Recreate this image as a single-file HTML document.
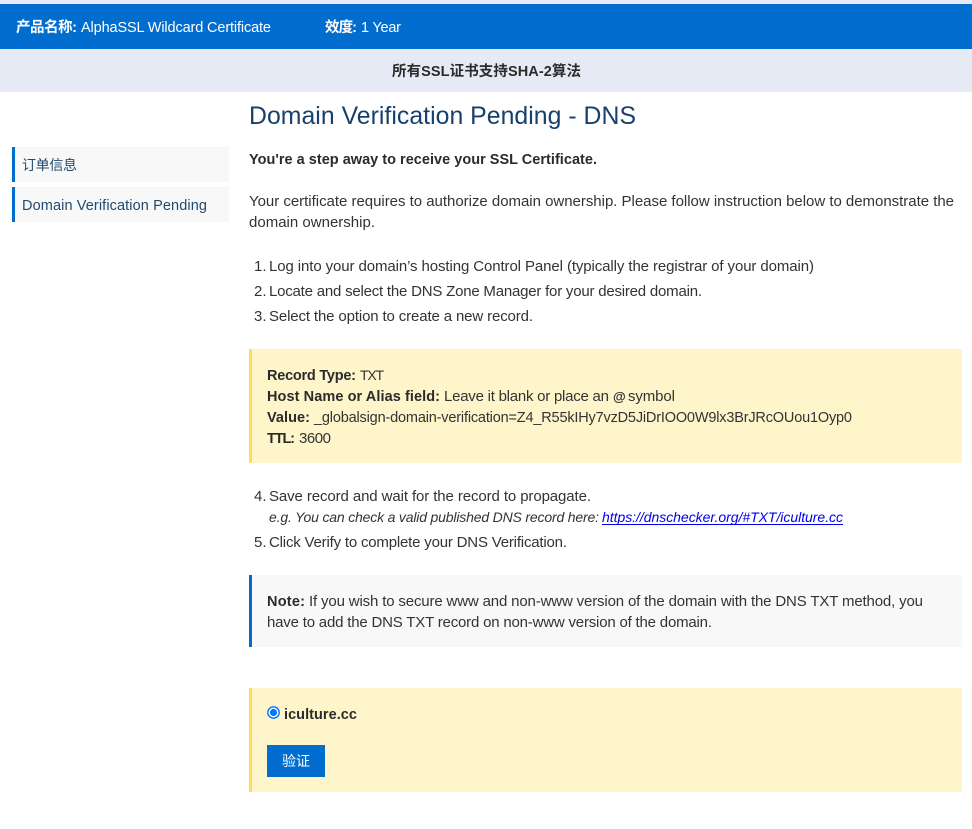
<!DOCTYPE html>
<html lang="zh"><head><meta charset="utf-8"><title>Domain Verification Pending - DNS</title>
<style>
html,body{margin:0;padding:0;background:#fff;width:972px;height:829px;overflow:hidden}
svg{display:block}
text{font-family:"Liberation Sans","Noto Sans CJK SC",sans-serif;font-size:15px;fill:#333;white-space:pre}
.b{font-weight:700;fill:#2b2b2b;font-size:14.5px}
.w{fill:#fff;font-size:14.5px}
</style></head><body>
<svg width="972" height="829" viewBox="0 0 972 829" xmlns="http://www.w3.org/2000/svg">
<rect width="972" height="829" fill="#fff"/>
<rect width="972" height="4" fill="#e6eaf4"/>
<rect y="4" width="972" height="45" fill="#006dcf"/>
<rect y="49" width="972" height="43" fill="#e6eaf4"/>
<rect x="12" y="147" width="217" height="35" fill="#f8f8f8"/><rect x="12" y="147" width="3" height="35" fill="#006dcf"/>
<rect x="12" y="187" width="217" height="35" fill="#f8f8f8"/><rect x="12" y="187" width="3" height="35" fill="#006dcf"/>
<rect x="249" y="349" width="713" height="114" fill="#fef5cb"/><rect x="249" y="349" width="3" height="114" fill="#ffdd57"/>
<rect x="249" y="575" width="713" height="72" fill="#f8f8f8"/><rect x="249" y="575" width="3" height="72" fill="#006dcf"/>
<rect x="249" y="688" width="713" height="104" fill="#fef5cb"/><rect x="249" y="688" width="3" height="104" fill="#ffdd57"/>
<rect x="267" y="745" width="58" height="32" fill="#006dcf"/>

<text class="b" style="fill:#fff" x="16" y="32" textLength="61">产品名称:</text>
<text class="w" x="81" y="32" textLength="190">AlphaSSL Wildcard Certificate</text>
<text class="b" style="fill:#fff" x="325" y="32" textLength="32">效度:</text>
<text class="w" x="361" y="32" textLength="40">1 Year</text>
<text class="b" x="392" y="76" textLength="189">所有SSL证书支持SHA-2算法</text>

<text x="249" y="124" textLength="387" style="font-size:24.8px;fill:#17406d">Domain Verification Pending - DNS</text>
<text x="22" y="170" textLength="55" style="font-size:14px;fill:#1f4a70">订单信息</text>
<text x="22" y="210" textLength="185" style="font-size:14.5px;fill:#1f4a70">Domain Verification Pending</text>

<text class="b" x="249" y="164" textLength="348">You're a step away to receive your SSL Certificate.</text>
<text x="249" y="206" textLength="705">Your certificate requires to authorize domain ownership. Please follow instruction below to demonstrate the</text>
<text x="249" y="227" textLength="126">domain ownership.</text>

<text x="254" y="271">1.</text><text x="269" y="271" textLength="545">Log into your domain’s hosting Control Panel (typically the registrar of your domain)</text>
<text x="254" y="296">2.</text><text x="269" y="296" textLength="433">Locate and select the DNS Zone Manager for your desired domain.</text>
<text x="254" y="321">3.</text><text x="269" y="321" textLength="264">Select the option to create a new record.</text>

<text class="b" x="267" y="380" textLength="89">Record Type:</text>
<text x="360" y="380" textLength="24" style="font-size:14px">TXT</text>
<text class="b" x="267" y="401" textLength="173">Host Name or Alias field:</text>
<text x="444" y="401" textLength="165">Leave it blank or place an</text>
<text class="b" x="613" y="401" style="font-size:13px">@</text>
<text x="628" y="401" textLength="47">symbol</text>
<text class="b" x="267" y="422" textLength="43">Value:</text>
<text x="314" y="422" textLength="538" style="font-size:14.5px">_globalsign-domain-verification=Z4_R55kIHy7vzD5JiDrIOO0W9lx3BrJRcOUou1Oyp0</text>
<text class="b" x="267" y="443" textLength="28">TTL:</text>
<text x="299" y="443" textLength="32">3600</text>

<text x="254" y="501">4.</text><text x="269" y="501" textLength="322">Save record and wait for the record to propagate.</text>
<text x="269" y="522" textLength="330" style="font-size:14px;font-style:italic">e.g. You can check a valid published DNS record here:</text>
<text x="602" y="522" textLength="241" style="font-size:14px;font-style:italic;fill:#0000ee">https://dnschecker.org/#TXT/iculture.cc</text>
<rect x="602" y="524" width="241" height="1" fill="#0000ee"/>
<text x="254" y="547">5.</text><text x="269" y="547" textLength="298">Click Verify to complete your DNS Verification.</text>

<text class="b" x="267" y="606" textLength="38">Note:</text>
<text x="309" y="606" textLength="614">If you wish to secure www and non-www version of the domain with the DNS TXT method, you</text>
<text x="267" y="627" textLength="445">have to add the DNS TXT record on non-www version of the domain.</text>

<circle cx="273.5" cy="712.5" r="5.7" fill="#fff" stroke="#0075ff" stroke-width="1.4"/>
<circle cx="273.5" cy="712.5" r="3.6" fill="#0075ff"/>
<text class="b" x="284" y="719" textLength="73">iculture.cc</text>
<text class="w" x="282" y="766" textLength="28" style="font-size:14px">验证</text>
</svg>
</body></html>
